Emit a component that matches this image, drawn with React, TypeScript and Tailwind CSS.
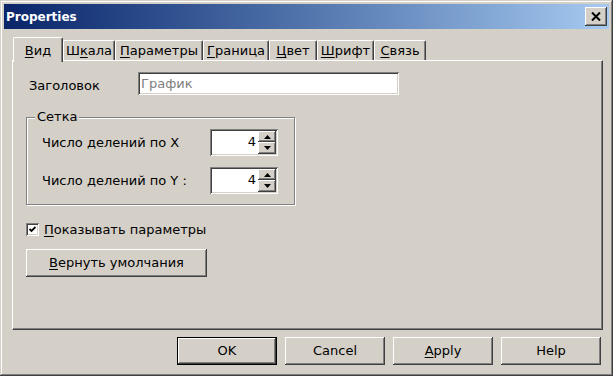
import React from "react";

const raised =
  "shadow-[inset_-1px_-1px_#404040,inset_1px_1px_#ffffff,inset_-2px_-2px_#808080,inset_2px_2px_#d4d0c8]";
const sunken =
  "shadow-[inset_1px_1px_#808080,inset_-1px_-1px_#ffffff,inset_2px_2px_#404040,inset_-2px_-2px_#d4d0c8]";

function Tab({ label, u, w, active }: { label: string; u: number; w: number; active?: boolean }) {
  const pre = label.slice(0, u);
  const ch = label.slice(u, u + 1);
  const post = label.slice(u + 1);
  return (
    <div
      style={{ width: w }}
      className={
        "flex items-start justify-center bg-[#d4d0c8] border-t border-l border-white border-r border-r-[#404040] rounded-t-[2px] shadow-[inset_-1px_0_#808080] " +
        (active ? "h-[25px] -mb-[2px] pt-[5px] relative z-10" : "h-[20px] pt-[2px]")
      }
    >
      <span className="leading-[15px]">
        {pre}
        <span className="underline underline-offset-2">{ch}</span>
        {post}
      </span>
    </div>
  );
}

function Spinner() {
  return (
    <div className={"w-[68px] h-[27px] bg-white flex items-stretch p-[2px] " + sunken}>
      <div className="flex-1 text-right pr-[2px] leading-[22px]">4</div>
      <div className="w-[18px] flex flex-col">
        <div className={"h-[11px] bg-[#d4d0c8] flex items-center justify-center " + raised}>
          <svg width="7" height="4" viewBox="0 0 7 4">
            <path d="M3.5 0 L7 4 L0 4 Z" fill="#000" />
          </svg>
        </div>
        <div className={"flex-1 bg-[#d4d0c8] flex items-center justify-center " + raised}>
          <svg width="7" height="4" viewBox="0 0 7 4">
            <path d="M0 0 L7 0 L3.5 4 Z" fill="#000" />
          </svg>
        </div>
      </div>
    </div>
  );
}

export default function App() {
  return (
    <div
      className="w-[613px] h-[376px] bg-[#d4d0c8] p-[4px] flex flex-col text-[13px] text-black shadow-[inset_-1px_-1px_#404040,inset_1px_1px_#d4d0c8,inset_-2px_-2px_#808080,inset_2px_2px_#ffffff]"
      style={{ fontFamily: '"DejaVu Sans", "Liberation Sans", sans-serif' }}
    >
      {/* Title bar */}
      <div className="h-[25px] w-[605px] flex items-center justify-between pl-[2px] pr-[2px] bg-gradient-to-r from-[#0a246a] to-[#a6caf0]">
        <span className="text-white font-bold text-[12px] leading-none">Properties</span>
        <div className={"w-[22px] h-[19px] bg-[#d4d0c8] flex items-center justify-center " + raised}>
          <svg width="10" height="9" viewBox="0 0 10 9">
            <path d="M1 0.5 L9 8.5 M9 0.5 L1 8.5" stroke="#000" strokeWidth="2" />
          </svg>
        </div>
      </div>

      {/* Tabs */}
      <div className="mt-[8px] ml-[9px] h-[23px] flex items-end">
        <Tab label="Вид" u={0} w={50} active />
        <Tab label="Шкала" u={1} w={52} />
        <Tab label="Параметры" u={0} w={88} />
        <Tab label="Граница" u={0} w={66} />
        <Tab label="Цвет" u={0} w={48} />
        <Tab label="Шрифт" u={0} w={57} />
        <Tab label="Связь" u={0} w={52} />
      </div>

      {/* Panel */}
      <div className="ml-[8px] w-[591px] h-[270px] border-t border-l border-white border-r border-b border-r-[#404040] border-b-[#404040] shadow-[inset_-1px_-1px_#808080] flex flex-col">
        <div className="mt-[11px] h-[23px] flex items-center">
          <span className="ml-[16px] w-[109px] pt-[4px]">Заголовок</span>
          <div className={"w-[261px] h-[23px] bg-white text-[#808080] pl-[3px] leading-[23px] " + sunken}>
            График
          </div>
        </div>

        {/* Group box */}
        <div className="relative mt-[22px] ml-[13px] w-[269px] h-[88px] border border-[#808080] shadow-[inset_1px_1px_#ffffff,1px_1px_#ffffff] flex flex-col">
          <span className="absolute -top-[9px] left-[8px] bg-[#d4d0c8] px-[2px] leading-[16px]">Сетка</span>
          <div className="mt-[11px] flex items-center">
            <span className="ml-[15px] w-[168px]">Число делений по X</span>
            <Spinner />
          </div>
          <div className="mt-[11px] flex items-center">
            <span className="ml-[15px] w-[168px]">Число делений по Y :</span>
            <Spinner />
          </div>
        </div>

        {/* Checkbox */}
        <div className="mt-[17px] ml-[13px] flex items-center gap-[5px]">
          <div className={"w-[13px] h-[13px] bg-white flex items-center justify-center " + sunken}>
            <svg width="7" height="7" viewBox="0 0 7 7">
              <path d="M0.5 3 L2.5 5 L6.5 1" stroke="#000" strokeWidth="1.8" fill="none" />
            </svg>
          </div>
          <span className="leading-[15px]">
            <span className="underline underline-offset-2">П</span>оказывать параметры
          </span>
        </div>

        <div className={"mt-[12px] ml-[13px] w-[181px] h-[28px] flex items-center justify-center " + raised}>
          <span>
            <span className="underline underline-offset-2">В</span>ернуть умолчания
          </span>
        </div>
      </div>

      {/* Buttons */}
      <div className="mt-[7px] mr-[8px] flex justify-end gap-[8px]">
        <div className="w-[100px] h-[28px] border border-black">
          <div className={"w-full h-full flex items-center justify-center " + raised}>OK</div>
        </div>
        <div className={"w-[100px] h-[28px] flex items-center justify-center " + raised}>Cancel</div>
        <div className={"w-[100px] h-[28px] flex items-center justify-center " + raised}>
          <span>
            <span className="underline underline-offset-2">A</span>pply
          </span>
        </div>
        <div className={"w-[100px] h-[28px] flex items-center justify-center " + raised}>Help</div>
      </div>
    </div>
  );
}
